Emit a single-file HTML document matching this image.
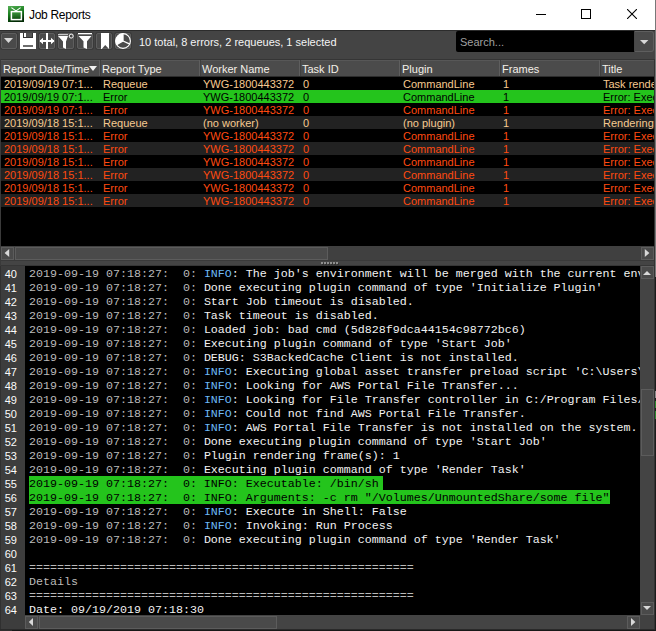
<!DOCTYPE html>
<html><head><meta charset="utf-8">
<style>
*{margin:0;padding:0;box-sizing:border-box}
html,body{width:656px;height:631px;overflow:hidden;background:#444}
body{position:relative;font-family:"Liberation Sans",sans-serif;font-size:11px}
.a{position:absolute}
.t{position:absolute;white-space:pre;line-height:13px}
#title{left:0;top:0;width:655px;height:30px;background:#fff}
#rb{left:655px;top:0;width:1px;height:631px;background:#6e6e6e}
#tb{left:0;top:30px;width:655px;height:30px;background:#444;border-top:1px solid #2c2c2c}
.btn{position:absolute;top:33px;width:16px;height:16px;border:1px solid #5e5e5e;border-radius:2px;background:#4a4a4a;box-shadow:0 0 0 1px #3a3a3a}
#hdr{left:1px;top:59px;width:653px;height:18px;background:#4b4b4b;border-top:1px solid #353535;border-bottom:1px solid #2c2c2c;box-shadow:inset 0 1px 0 #575757}
.sep{position:absolute;top:0;width:1px;height:16px;background:#5e5e5e;box-shadow:1px 0 0 #404040}
#tbl{left:1px;top:77px;width:653px;height:169px;background:#000;overflow:hidden}
.row{position:absolute;left:0;width:653px;height:13px}
.row .t{top:1px}
.hs{position:absolute;background:#404040}
.sbtn{position:absolute;border:1px solid #5c5c5c;background:#4a4a4a}
.hdl{position:absolute;border:1px solid #5c5c5c;background:#4a4a4a}
#log{left:25px;top:266px;width:615px;height:349px;background:#000;overflow:hidden;font-family:"Liberation Mono",monospace;font-size:11.67px}
.ln{position:absolute;left:4px;height:14px;line-height:16px;white-space:pre;color:#c9c9c9}
.gut{position:absolute;left:0;height:14px;width:24px;line-height:16px;text-align:right;padding-right:8px;color:#fcfcfc}
.ts{color:#bababa}
.inf{color:#6cb8f6}
.w{color:#f2f2f2}
.hl{background:#24c41c;color:#000}
.hl span{color:#000}
</style></head><body>
<!-- title bar -->
<div id="title" class="a">
  <svg class="a" style="left:8px;top:6px" width="16" height="16" viewBox="0 0 16 16">
    <defs><linearGradient id="ig" x1="0" y1="0" x2="0.3" y2="1"><stop offset="0" stop-color="#57b057"/><stop offset="0.55" stop-color="#157a1a"/><stop offset="1" stop-color="#022a04"/></linearGradient>
    <linearGradient id="sg" x1="0" y1="0" x2="0" y2="1"><stop offset="0" stop-color="#3d9a3d"/><stop offset="1" stop-color="#0a4a0c"/></linearGradient></defs>
    <rect x="0" y="0" width="16" height="16" fill="url(#ig)"/>
    <path d="M3.4 1.6L8 4.9L12.6 1.6" stroke="#fff" stroke-width="1.1" fill="none"/>
    <rect x="3.4" y="5.6" width="10" height="8" fill="url(#sg)" stroke="#fff" stroke-width="1.5"/>
  </svg>
  <div class="t" style="left:29px;top:8px;font-size:12px;line-height:14px;color:#000;letter-spacing:-0.3px">Job Reports</div>
  <div class="a" style="left:536px;top:14px;width:10px;height:1px;background:#000"></div>
  <div class="a" style="left:581px;top:9px;width:10px;height:10px;border:1px solid #000"></div>
  <svg class="a" style="left:627px;top:9px" width="10" height="10" viewBox="0 0 10 10"><path d="M0 0L10 10M10 0L0 10" stroke="#000" stroke-width="1.1"/></svg>
</div>

<!-- toolbar -->
<div id="tb" class="a"></div>
<div class="btn" style="left:1px"><svg class="a" style="left:-1px;top:-1px" width="16" height="16"><path d="M3 5H12L7.5 10Z" fill="#d8d8d8"/></svg></div>
<svg class="a" style="left:20px;top:33px" width="16" height="16" viewBox="0 0 16 16">
  <rect x="0" y="0" width="16" height="16" fill="#fff"/>
  <rect x="3" y="0" width="10" height="5" fill="#333"/>
  <rect x="4" y="0" width="2" height="4" fill="#fff"/>
  <rect x="6" y="0" width="6" height="4" fill="#555"/>
  <rect x="3" y="12.2" width="10" height="1.6" fill="#4a4a4a"/>
</svg>
<div class="btn" style="left:39px"><svg class="a" style="left:-1px;top:-1px" width="16" height="16" viewBox="0 0 16 16">
  <rect x="7" y="0" width="2" height="16" fill="#fff"/>
  <rect x="1" y="7" width="14" height="2" fill="#fff"/>
  <path d="M0.5 8L4 4.8V11.2Z M15.5 8L12 4.8V11.2Z" fill="#fff"/>
</svg></div>
<div class="btn" style="left:58px"><svg class="a" style="left:-1px;top:-1px" width="16" height="16" viewBox="0 0 16 16">
  <rect x="0" y="1" width="10" height="1.2" fill="#c8c8c8"/>
  <path d="M0 3H10L8 8.5V16L5 14.5V8.5Z" fill="#fff"/>
  <circle cx="13.2" cy="3.1" r="2" stroke="#fff" stroke-width="1" fill="#444"/>
</svg></div>
<div class="btn" style="left:77px"><svg class="a" style="left:-1px;top:-1px" width="16" height="16" viewBox="0 0 16 16">
  <rect x="1" y="0" width="14" height="1.3" fill="#fff"/>
  <path d="M1.5 3H14.5L10 8.2V16L6.5 14.5V8.2Z" fill="#fff"/>
</svg></div>
<div class="btn" style="left:96px"><svg class="a" style="left:-1px;top:-1px" width="16" height="16" viewBox="0 0 16 16">
  <path d="M5 0H13V16L9.2 12L5.8 16H5Z" fill="#fff"/>
</svg></div>
<div class="btn" style="left:115px"><svg class="a" style="left:-1px;top:-1px" width="16" height="16" viewBox="0 0 16 16">
  <circle cx="8" cy="8" r="7.4" fill="none" stroke="#fff" stroke-width="1.1"/>
  <path d="M8 8V0.6A7.4 7.4 0 0 0 1.6 11.7Z" fill="#fff"/>
  <path d="M8 8L14.9 11.2M8 8L1.6 11.7M8 8V0.6" stroke="#fff" stroke-width="1.3"/>
</svg></div>
<div class="t" style="left:139px;top:36px;color:#f4f4f4">10 total, 8 errors, 2 requeues, 1 selected</div>
<div class="a" style="left:456px;top:31px;width:180px;height:21px;background:#000;border-radius:2px 0 0 2px"></div>
<div class="t" style="left:460px;top:36px;color:#a0a0a0">Search...</div>
<div class="btn" style="left:634px;top:31px;width:20px;height:21px;box-shadow:none;border-left-color:#474747;border-radius:0 3px 3px 0"><svg class="a" style="left:4px;top:5px" width="12" height="10"><path d="M1 3H9.4L5.2 7.3Z" fill="#d8d8d8"/></svg></div>

<!-- header -->
<div id="hdr" class="a">
  <div class="sep" style="left:98px"></div>
  <div class="sep" style="left:198px"></div>
  <div class="sep" style="left:298px"></div>
  <div class="sep" style="left:398px"></div>
  <div class="sep" style="left:498px"></div>
  <div class="sep" style="left:598px"></div>
</div>
<div class="a" style="left:0;top:59px;width:1px;height:207px;background:#3a3a3a"></div>
<div class="a" style="left:0;top:266px;width:1px;height:365px;background:#303030"></div>
<div class="t" style="left:3px;top:63px;color:#f4f0e8">Report Date/Time</div>
<svg class="a" style="left:89px;top:66px" width="8" height="5"><path d="M0 0H8L4 5Z" fill="#f0f0f0"/></svg>
<div class="t" style="left:102px;top:63px;color:#f4f0e8">Report Type</div>
<div class="t" style="left:202px;top:63px;color:#f4f0e8">Worker Name</div>
<div class="t" style="left:302px;top:63px;color:#f4f0e8">Task ID</div>
<div class="t" style="left:402px;top:63px;color:#f4f0e8">Plugin</div>
<div class="t" style="left:502px;top:63px;color:#f4f0e8">Frames</div>
<div class="t" style="left:602px;top:63px;color:#f4f0e8">Title</div>

<!-- table -->
<div id="tbl" class="a">
<div class="row" style="top:0px;background:#000;color:#f7ca90"><div class="t" style="left:3px">2019/09/19 07:1...</div><div class="t" style="left:102px">Requeue</div><div class="t" style="left:202px">YWG-1800443372</div><div class="t" style="left:302px">0</div><div class="t" style="left:402px">CommandLine</div><div class="t" style="left:502px">1</div><div class="t" style="left:602px">Task rende</div></div>
<div class="row" style="top:13px;background:#24c41c;color:#000"><div class="t" style="left:3px">2019/09/19 07:1...</div><div class="t" style="left:102px">Error</div><div class="t" style="left:202px">YWG-1800443372</div><div class="t" style="left:302px">0</div><div class="t" style="left:402px">CommandLine</div><div class="t" style="left:502px">1</div><div class="t" style="left:602px">Error: Exec</div></div>
<div class="row" style="top:26px;background:#000;color:#ff4a10"><div class="t" style="left:3px">2019/09/19 07:1...</div><div class="t" style="left:102px">Error</div><div class="t" style="left:202px">YWG-1800443372</div><div class="t" style="left:302px">0</div><div class="t" style="left:402px">CommandLine</div><div class="t" style="left:502px">1</div><div class="t" style="left:602px">Error: Exec</div></div>
<div class="row" style="top:39px;background:#222222;color:#f7ca90"><div class="t" style="left:3px">2019/09/18 15:1...</div><div class="t" style="left:102px">Requeue</div><div class="t" style="left:202px">(no worker)</div><div class="t" style="left:302px">0</div><div class="t" style="left:402px">(no plugin)</div><div class="t" style="left:502px">1</div><div class="t" style="left:602px">Rendering</div></div>
<div class="row" style="top:52px;background:#000;color:#ff4a10"><div class="t" style="left:3px">2019/09/18 15:1...</div><div class="t" style="left:102px">Error</div><div class="t" style="left:202px">YWG-1800443372</div><div class="t" style="left:302px">0</div><div class="t" style="left:402px">CommandLine</div><div class="t" style="left:502px">1</div><div class="t" style="left:602px">Error: Exec</div></div>
<div class="row" style="top:65px;background:#222222;color:#ff4a10"><div class="t" style="left:3px">2019/09/18 15:1...</div><div class="t" style="left:102px">Error</div><div class="t" style="left:202px">YWG-1800443372</div><div class="t" style="left:302px">0</div><div class="t" style="left:402px">CommandLine</div><div class="t" style="left:502px">1</div><div class="t" style="left:602px">Error: Exec</div></div>
<div class="row" style="top:78px;background:#000;color:#ff4a10"><div class="t" style="left:3px">2019/09/18 15:1...</div><div class="t" style="left:102px">Error</div><div class="t" style="left:202px">YWG-1800443372</div><div class="t" style="left:302px">0</div><div class="t" style="left:402px">CommandLine</div><div class="t" style="left:502px">1</div><div class="t" style="left:602px">Error: Exec</div></div>
<div class="row" style="top:91px;background:#222222;color:#ff4a10"><div class="t" style="left:3px">2019/09/18 15:1...</div><div class="t" style="left:102px">Error</div><div class="t" style="left:202px">YWG-1800443372</div><div class="t" style="left:302px">0</div><div class="t" style="left:402px">CommandLine</div><div class="t" style="left:502px">1</div><div class="t" style="left:602px">Error: Exec</div></div>
<div class="row" style="top:104px;background:#000;color:#ff4a10"><div class="t" style="left:3px">2019/09/18 15:1...</div><div class="t" style="left:102px">Error</div><div class="t" style="left:202px">YWG-1800443372</div><div class="t" style="left:302px">0</div><div class="t" style="left:402px">CommandLine</div><div class="t" style="left:502px">1</div><div class="t" style="left:602px">Error: Exec</div></div>
<div class="row" style="top:117px;background:#222222;color:#ff4a10"><div class="t" style="left:3px">2019/09/18 15:1...</div><div class="t" style="left:102px">Error</div><div class="t" style="left:202px">YWG-1800443372</div><div class="t" style="left:302px">0</div><div class="t" style="left:402px">CommandLine</div><div class="t" style="left:502px">1</div><div class="t" style="left:602px">Error: Exec</div></div>
</div>

<!-- table h scrollbar -->
<div class="hs" style="left:1px;top:246px;width:653px;height:14px"></div>
<div class="sbtn" style="left:1px;top:247px;width:13px;height:13px"></div>
<div class="hdl" style="left:15px;top:247px;width:313px;height:13px"></div>
<div class="sbtn" style="left:641px;top:247px;width:13px;height:13px"></div>
<svg class="a" style="left:0;top:240px" width="656" height="30"><path d="M4.6 13L9.2 9V17Z M649.4 13L644.8 9V17Z" fill="#d8d8d8"/></svg>
<!-- splitter grip -->
<div class="a" style="left:1px;top:260px;width:653px;height:1px;background:#393939"></div>
<div class="a" style="left:1px;top:265px;width:653px;height:1px;background:#363636"></div>
<svg class="a" style="left:320px;top:261px" width="20" height="5"><g fill="#333"><rect x="2" y="2" width="2" height="2"/><rect x="5" y="2" width="2" height="2"/><rect x="8" y="2" width="2" height="2"/><rect x="11" y="2" width="2" height="2"/><rect x="14" y="2" width="2" height="2"/><rect x="17" y="2" width="2" height="2"/></g><g fill="#8e8e8e"><rect x="1" y="1" width="2" height="2"/><rect x="4" y="1" width="2" height="2"/><rect x="7" y="1" width="2" height="2"/><rect x="10" y="1" width="2" height="2"/><rect x="13" y="1" width="2" height="2"/><rect x="16" y="1" width="2" height="2"/></g></svg>

<!-- log -->
<div class="a" style="left:1px;top:266px;width:24px;height:363px;background:#3d3d3d"></div>
<div id="log" class="a">
<div class="ln" style="top:0px"><span class="ts">2019-09-19 07:18:27:  0: </span><span class="inf">INFO</span><span class="w">: The job&#x27;s environment will be merged with the current environment</span></div>
<div class="ln" style="top:14px"><span class="ts">2019-09-19 07:18:27:  0: </span><span class="w">Done executing plugin command of type &#x27;Initialize Plugin&#x27;</span></div>
<div class="ln" style="top:28px"><span class="ts">2019-09-19 07:18:27:  0: </span><span class="w">Start Job timeout is disabled.</span></div>
<div class="ln" style="top:42px"><span class="ts">2019-09-19 07:18:27:  0: </span><span class="w">Task timeout is disabled.</span></div>
<div class="ln" style="top:56px"><span class="ts">2019-09-19 07:18:27:  0: </span><span class="w">Loaded job: bad cmd (5d828f9dca44154c98772bc6)</span></div>
<div class="ln" style="top:70px"><span class="ts">2019-09-19 07:18:27:  0: </span><span class="w">Executing plugin command of type &#x27;Start Job&#x27;</span></div>
<div class="ln" style="top:84px"><span class="ts">2019-09-19 07:18:27:  0: </span><span class="w">DEBUG: S3BackedCache Client is not installed.</span></div>
<div class="ln" style="top:98px"><span class="ts">2019-09-19 07:18:27:  0: </span><span class="inf">INFO</span><span class="w">: Executing global asset transfer preload script &#x27;C:\Users\Administrator&#x27;</span></div>
<div class="ln" style="top:112px"><span class="ts">2019-09-19 07:18:27:  0: </span><span class="inf">INFO</span><span class="w">: Looking for AWS Portal File Transfer...</span></div>
<div class="ln" style="top:126px"><span class="ts">2019-09-19 07:18:27:  0: </span><span class="inf">INFO</span><span class="w">: Looking for File Transfer controller in C:/Program Files/Thinkbox</span></div>
<div class="ln" style="top:140px"><span class="ts">2019-09-19 07:18:27:  0: </span><span class="inf">INFO</span><span class="w">: Could not find AWS Portal File Transfer.</span></div>
<div class="ln" style="top:154px"><span class="ts">2019-09-19 07:18:27:  0: </span><span class="inf">INFO</span><span class="w">: AWS Portal File Transfer is not installed on the system.</span></div>
<div class="ln" style="top:168px"><span class="ts">2019-09-19 07:18:27:  0: </span><span class="w">Done executing plugin command of type &#x27;Start Job&#x27;</span></div>
<div class="ln" style="top:182px"><span class="ts">2019-09-19 07:18:27:  0: </span><span class="w">Plugin rendering frame(s): 1</span></div>
<div class="ln" style="top:196px"><span class="ts">2019-09-19 07:18:27:  0: </span><span class="w">Executing plugin command of type &#x27;Render Task&#x27;</span></div>
<div class="ln hl" style="top:210px;width:354px">2019-09-19 07:18:27:  0: INFO: Executable: /bin/sh</div>
<div class="ln hl" style="top:224px;width:581px">2019-09-19 07:18:27:  0: INFO: Arguments: -c rm &quot;/Volumes/UnmountedShare/some file&quot;</div>
<div class="ln" style="top:238px"><span class="ts">2019-09-19 07:18:27:  0: </span><span class="inf">INFO</span><span class="w">: Execute in Shell: False</span></div>
<div class="ln" style="top:252px"><span class="ts">2019-09-19 07:18:27:  0: </span><span class="inf">INFO</span><span class="w">: Invoking: Run Process</span></div>
<div class="ln" style="top:266px"><span class="ts">2019-09-19 07:18:27:  0: </span><span class="w">Done executing plugin command of type &#x27;Render Task&#x27;</span></div>
<div class="ln" style="top:294px"><span class="ts">=======================================================</span></div>
<div class="ln" style="top:308px"><span class="ts">Details</span></div>
<div class="ln" style="top:322px"><span class="ts">=======================================================</span></div>
<div class="ln" style="top:336px"><span class="w">Date: 09/19/2019 07:18:30</span></div>
</div>
<div class="gut" style="top:266px;left:1px">40</div>
<div class="gut" style="top:280px;left:1px">41</div>
<div class="gut" style="top:294px;left:1px">42</div>
<div class="gut" style="top:308px;left:1px">43</div>
<div class="gut" style="top:322px;left:1px">44</div>
<div class="gut" style="top:336px;left:1px">45</div>
<div class="gut" style="top:350px;left:1px">46</div>
<div class="gut" style="top:364px;left:1px">47</div>
<div class="gut" style="top:378px;left:1px">48</div>
<div class="gut" style="top:392px;left:1px">49</div>
<div class="gut" style="top:406px;left:1px">50</div>
<div class="gut" style="top:420px;left:1px">51</div>
<div class="gut" style="top:434px;left:1px">52</div>
<div class="gut" style="top:448px;left:1px">53</div>
<div class="gut" style="top:462px;left:1px">54</div>
<div class="gut" style="top:476px;left:1px">55</div>
<div class="gut" style="top:490px;left:1px">56</div>
<div class="gut" style="top:504px;left:1px">57</div>
<div class="gut" style="top:518px;left:1px">58</div>
<div class="gut" style="top:532px;left:1px">59</div>
<div class="gut" style="top:546px;left:1px">60</div>
<div class="gut" style="top:560px;left:1px">61</div>
<div class="gut" style="top:574px;left:1px">62</div>
<div class="gut" style="top:588px;left:1px">63</div>
<div class="gut" style="top:602px;left:1px">64</div>

<!-- log v scrollbar -->
<div class="hs" style="left:640px;top:266px;width:14px;height:349px;background:#444"></div>
<div class="sbtn" style="left:641px;top:266px;width:13px;height:13px"></div>
<div class="hdl" style="left:641px;top:389px;width:13px;height:67px"></div>
<div class="sbtn" style="left:641px;top:602px;width:13px;height:13px"></div>
<!-- log h scrollbar -->
<div class="hs" style="left:25px;top:615px;width:615px;height:14px;background:#444"></div>
<div class="a" style="left:640px;top:615px;width:14px;height:14px;background:#414141"></div>
<div class="sbtn" style="left:25px;top:616px;width:13px;height:13px"></div>
<div class="hdl" style="left:39px;top:616px;width:238px;height:13px"></div>
<div class="sbtn" style="left:627px;top:616px;width:13px;height:13px"></div>
<svg class="a" style="left:0;top:260px" width="656" height="371"><path d="M643 15L647 11L651 15Z M643 346L651 346L647 350Z M28.8 362L33 358V366Z M635.4 362L631 358V366Z" fill="#d8d8d8"/></svg>
<div class="a" style="left:0;top:629px;width:656px;height:1px;background:#2a2a2a"></div>
<div class="a" style="left:0;top:630px;width:656px;height:1px;background:#181818"></div>
<div class="a" style="left:0;top:630px;width:12px;height:1px;background:#303030"></div>
<div class="a" style="left:654px;top:59px;width:1px;height:570px;background:#333"></div>
<div class="a" style="left:655px;top:0;width:1px;height:277px;background:#787878"></div>
<div class="a" style="left:655px;top:277px;width:1px;height:354px;background:#1c1c1c"></div>
<div class="a" style="left:655px;top:391px;width:1px;height:7px;background:#8a8a8a"></div>
<div class="a" style="left:655px;top:401px;width:1px;height:7px;background:#2f8a2f"></div>
<div class="a" style="left:655px;top:411px;width:1px;height:8px;background:#2f8a2f"></div>
</body></html>
